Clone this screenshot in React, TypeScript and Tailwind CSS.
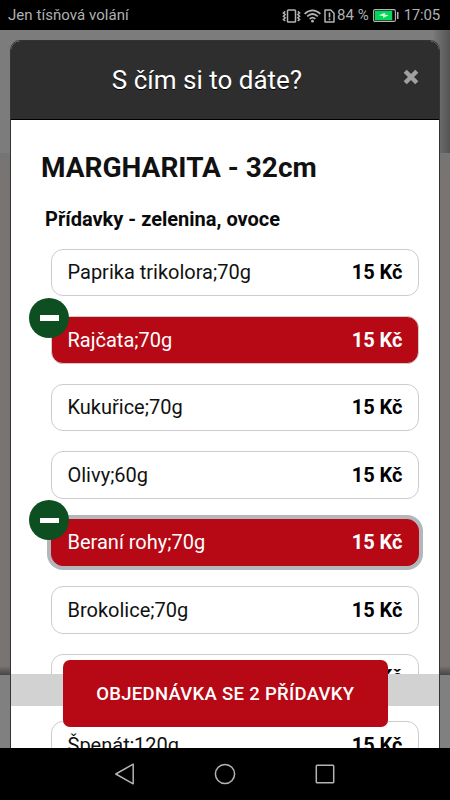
import clsx from "clsx";

interface Topping {
  name: string;
  price: string;
  selected?: boolean;
  focused?: boolean;
}

const TOPPINGS: Topping[] = [
  { name: "Paprika trikolora;70g", price: "15 Kč" },
  { name: "Rajčata;70g", price: "15 Kč", selected: true },
  { name: "Kukuřice;70g", price: "15 Kč" },
  { name: "Olivy;60g", price: "15 Kč" },
  { name: "Beraní rohy;70g", price: "15 Kč", selected: true, focused: true },
  { name: "Brokolice;70g", price: "15 Kč" },
  { name: "", price: "15 Kč" },
  { name: "Špenát;120g", price: "15 Kč" },
];

function VibrateIcon() {
  return (
    <svg width="19" height="14" viewBox="0 0 19 14" fill="none" stroke="#b4b4b4">
      <rect x="5.5" y="1" width="8" height="12" rx="0.8" strokeWidth="1.5" />
      <path d="M3.2 2.4 L1.4 4 L3.2 5.6 L1.4 7.2 L3.2 8.8 L1.4 10.4 L3.2 12" strokeWidth="1.5" />
      <path d="M15.8 2.4 L17.6 4 L15.8 5.6 L17.6 7.2 L15.8 8.8 L17.6 10.4 L15.8 12" strokeWidth="1.5" />
    </svg>
  );
}

function WifiIcon() {
  return (
    <svg width="17" height="14" viewBox="0 0 17 14" fill="none" stroke="#b4b4b4" strokeWidth="1.7">
      <path d="M0.6 4.8 Q8.5 -2.2 16.4 4.8" />
      <path d="M3.2 7.4 Q8.5 2.6 13.8 7.4" />
      <path d="M5.6 9.9 Q8.5 7.3 11.4 9.9" />
      <circle cx="8.5" cy="12.2" r="1.4" fill="#b4b4b4" stroke="none" />
    </svg>
  );
}

function SimIcon() {
  return (
    <svg width="11" height="14" viewBox="0 0 11 14" fill="none" stroke="#b4b4b4">
      <path d="M1 1 H6.8 L10 4.2 V13 H1 Z" strokeWidth="1.5" strokeLinejoin="round" />
      <path d="M5.5 3.6 V8.4 M5.5 9.6 V11.2" strokeWidth="1.6" />
    </svg>
  );
}

function BatteryIcon() {
  return (
    <svg width="26" height="13" viewBox="0 0 26 13" fill="none">
      <rect x="0.6" y="0.6" width="21.8" height="11.8" rx="1.4" stroke="#b4b4b4" strokeWidth="1.1" />
      <rect x="1.8" y="1.8" width="17.4" height="9.4" fill="#05d75c" />
      <path d="M5.8 6.2 L12 3.8 L11.6 5.6 L15.6 6.2 L10 9 L10.2 6.9 Z" fill="#d8ffe6" />
      <path d="M24.7 3 V10" stroke="#b4b4b4" strokeWidth="1.6" />
    </svg>
  );
}

function StatusBar() {
  return (
    <header className="flex h-[30px] shrink-0 items-center bg-black pt-[1px] pr-[10px] pl-[8px] text-[#b0b0b0]">
      <span className="text-[15px] tracking-[0.05px]">Jen tísňová volání</span>
      <div className="ml-auto flex items-center text-[15px]">
        <VibrateIcon />
        <div className="ml-[3px]">
          <WifiIcon />
        </div>
        <div className="ml-[3px]">
          <SimIcon />
        </div>
        <span className="ml-[2px]">84 %</span>
        <div className="ml-[4px]">
          <BatteryIcon />
        </div>
        <span className="ml-[5px] tracking-[-0.2px]">17:05</span>
      </div>
    </header>
  );
}

function Backdrop() {
  return (
    <div className="absolute inset-0 flex flex-col">
      <div className="flex h-[123px] bg-[#7c7c7c]">
        <div className="ml-auto w-[16px] bg-linear-to-r from-[#777777] to-[#555555]" />
      </div>
      <div className="h-[30px] bg-linear-to-b from-[#757575] to-[#797371]" />
      <div className="flex-1 bg-[#797371]" />
      <div className="h-[9px] bg-linear-to-b from-[#797371] to-[#4a4645]" />
      <div className="h-[73px] bg-[#808080]" />
    </div>
  );
}

function ToppingRow({ topping }: { topping: Topping }) {
  const { name, price, selected, focused } = topping;
  return (
    <li
      className={clsx(
        "relative flex h-[47.5px] items-center justify-between rounded-[12px] border pr-[15.5px] pl-[15.5px] text-[20px]",
        selected ? "bg-[#b60815] text-white" : "bg-white text-[#111111]",
        focused ? "border-[#b60815] shadow-[0_0_0_4px_#b3b7bb]" : "border-[#cccccc]",
      )}
    >
      {selected ? (
        <span className="absolute -top-[19.5px] -left-[23px] flex size-[40px] items-center justify-center rounded-full bg-[#0d4f20]">
          <span className="mt-[1px] ml-[1px] h-[5.5px] w-[19px] bg-white" />
        </span>
      ) : null}
      <span>{name}</span>
      <span className={clsx("font-bold", !selected && "text-black")}>{price}</span>
    </li>
  );
}

function NavBar() {
  return (
    <nav className="relative flex h-[52px] shrink-0 items-center justify-center gap-[78px] bg-black">
      <svg width="22" height="22" viewBox="0 0 22 22" fill="none" stroke="#b4b4b4" strokeWidth="1.5">
        <path d="M19.2 1.2 V20.8 L1.8 11 Z" strokeLinejoin="round" />
      </svg>
      <svg width="22" height="22" viewBox="0 0 22 22" fill="none" stroke="#b4b4b4" strokeWidth="1.5">
        <circle cx="11" cy="11" r="9.6" />
      </svg>
      <svg width="22" height="22" viewBox="0 0 22 22" fill="none" stroke="#b4b4b4" strokeWidth="1.5">
        <rect x="2.3" y="2.3" width="17.4" height="17.4" rx="0.8" />
      </svg>
    </nav>
  );
}

export default function App() {
  return (
    <div className="flex h-[800px] w-[450px] flex-col overflow-hidden bg-black font-['Roboto',sans-serif]">
      <StatusBar />
      <main className="relative h-[718px] overflow-hidden">
        <Backdrop />
        <section className="relative mr-[10px] ml-[10px] mt-[10px] h-[760px] overflow-hidden rounded-t-[10px] border border-b-0 border-[#333333] bg-white">
          <div className="relative flex h-[79px] items-center justify-center border-b border-black bg-[#2e2e2e] pr-[36px]">
            <h1 className="text-[26px] text-white [text-shadow:0_1px_0_#000]">
              S čím si to dáte?
            </h1>
            <button type="button" aria-label="Zavřít" className="absolute top-[28px] right-[20px]">
              <svg width="16" height="16" viewBox="0 0 16 16" stroke="#a0a0a0" strokeWidth="4.4">
                <path d="M2.2 2.2 L13.8 13.8 M13.8 2.2 L2.2 13.8" />
              </svg>
            </button>
          </div>
          <h2 className="mt-[29px] ml-[30px] text-[28px] leading-[38px] font-bold text-[#111111]">
            MARGHARITA - 32cm
          </h2>
          <h3 className="mt-[19px] ml-[34px] text-[20px] leading-[26px] font-bold text-[#0a0a0a]">
            Přídavky - zelenina, ovoce
          </h3>
          <ul className="mt-[16.5px] mr-[20px] ml-[40px] flex flex-col gap-[20px]">
            {TOPPINGS.map((topping, i) => (
              <ToppingRow key={i} topping={topping} />
            ))}
          </ul>
        </section>
        <div className="absolute top-[644px] right-[11px] left-[11px] h-[32px] bg-[#d2d2d2]" />
        <button
          type="button"
          className="absolute top-[630px] left-[63px] h-[67px] w-[324.5px] rounded-[7px] bg-[#b60815] pt-[3px] text-[18.5px] font-medium tracking-[0.3px] text-white"
        >
          OBJEDNÁVKA SE 2 PŘÍDAVKY
        </button>
      </main>
      <NavBar />
    </div>
  );
}
